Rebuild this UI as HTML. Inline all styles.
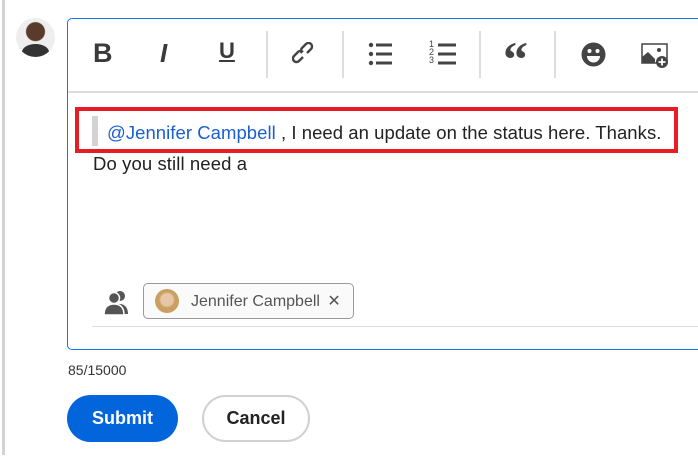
<!DOCTYPE html>
<html><head><style>
body{margin:0;width:698px;height:465px;background:#fff;font-family:"Liberation Sans",sans-serif;position:relative;overflow:hidden;color:#222}
.abs{position:absolute}
.sep{position:absolute;top:31px;width:2px;height:47px;background:#ddd}
.ic{position:absolute;top:38px;color:#444}
</style></head><body>
<div class="abs" style="left:2px;top:0;width:3px;height:455px;background:#d3d3d3"></div>
<div class="abs" style="left:16px;top:18px;width:39px;height:39px;border-radius:50%;background:radial-gradient(circle at 50% 35%,#5a3a2a 0 9px,#eee 10px);overflow:hidden">
<div class="abs" style="left:6px;top:26px;width:27px;height:16px;border-radius:50% 50% 0 0;background:#333"></div></div>
<div class="abs" style="left:67px;top:18px;width:640px;height:332px;border:1px solid #1a73e8;border-radius:5px;box-sizing:border-box"></div>
<div class="abs" style="left:68px;top:91px;width:630px;height:2px;background:#ddd"></div>
<div class="ic" style="left:93px;top:38px;font-weight:bold;font-size:27px;color:#3a3a3a">B</div>
<div class="ic" style="left:160px;top:38px;font-style:italic;font-size:26px;font-weight:bold;color:#3a3a3a">I</div>
<div class="ic" style="left:219px;top:38px;font-size:22px;font-weight:bold;text-decoration:underline;color:#3a3a3a">U</div>
<div class="sep" style="left:266px"></div>
<svg class="abs" style="left:292px;top:42px" width="26" height="26" viewBox="0 0 26 26" fill="none" stroke="#444" stroke-width="2.4"><path d="M11 15l-4 4a3.5 3.5 0 0 1-5-5l4-4a3.5 3.5 0 0 1 5 0"/><path d="M15 11l4-4a3.5 3.5 0 0 0-5-5l-4 4a3.5 3.5 0 0 0 0 5"/></svg>
<div class="sep" style="left:342px"></div>
<svg class="abs" style="left:368px;top:42px" width="26" height="24"><g fill="#444"><circle cx="3" cy="3" r="2.2"/><circle cx="3" cy="12" r="2.2"/><circle cx="3" cy="21" r="2.2"/><rect x="8" y="1.5" width="16" height="3"/><rect x="8" y="10.5" width="16" height="3"/><rect x="8" y="19.5" width="16" height="3"/></g></svg>
<div class="abs" style="left:429px;top:40px;font-size:9px;line-height:8px;color:#444">1<br>2<br>3</div>
<svg class="abs" style="left:438px;top:42px" width="20" height="24"><g fill="#444"><rect x="0" y="1.5" width="18" height="3"/><rect x="0" y="10.5" width="18" height="3"/><rect x="0" y="19.5" width="18" height="3"/></g></svg>
<div class="sep" style="left:479px"></div>
<div class="abs" style="left:503px;top:30px;font-size:50px;font-weight:bold;color:#444;font-family:'Liberation Serif',serif">“</div>
<div class="sep" style="left:554px"></div>
<svg class="abs" style="left:581px;top:42px" width="25" height="25" viewBox="0 0 25 25"><circle cx="12.5" cy="12.5" r="12" fill="#444"/><circle cx="8.5" cy="9" r="2" fill="#fff"/><circle cx="16.5" cy="9" r="2" fill="#fff"/><path d="M6 14h13a6.5 6.5 0 0 1-13 0z" fill="#fff"/></svg>
<svg class="abs" style="left:641px;top:43px" width="28" height="26" viewBox="0 0 28 26"><rect x="1" y="1" width="25" height="19" fill="none" stroke="#444" stroke-width="1.5"/><path d="M1 20V14l6-5 7 7v4z" fill="#444"/><circle cx="18" cy="7" r="2" fill="#444"/><circle cx="21" cy="19" r="6" fill="#444"/><path d="M21 15.5v7M17.5 19h7" stroke="#fff" stroke-width="1.8"/></svg>
<div class="abs" style="left:75px;top:107px;width:603px;height:46px;border:4px solid #e81c24;box-sizing:border-box"></div>
<div class="abs" style="left:92px;top:116px;width:6px;height:30px;background:#d3d3d3"></div>
<div class="abs" style="left:107px;top:122px;font-size:18.5px;letter-spacing:0.05px;white-space:nowrap"><span style="color:#1a5fd0">@Jennifer Campbell</span> , I need an update on the status here. Thanks.</div>
<div class="abs" style="left:93px;top:153px;font-size:18.5px;letter-spacing:0.1px">Do you still need a</div>
<svg class="abs" style="left:103px;top:289px" width="28" height="26" viewBox="0 0 28 26"><g fill="#555"><circle cx="17" cy="7" r="5"/><path d="M10 25c0-7 3-10 7-10s8 3 8 10z"/><circle cx="11" cy="9" r="5.5" stroke="#fff" stroke-width="1.5"/><path d="M1 26c0-8 4-11 10-11s10 3 10 11z" stroke="#fff" stroke-width="1.5"/></g></svg>
<div class="abs" style="left:143px;top:283px;width:211px;height:36px;border:1px solid #999;border-radius:5px;box-sizing:border-box;background:#fafafa"></div>
<div class="abs" style="left:155px;top:289px;width:24px;height:24px;border-radius:50%;background:radial-gradient(circle at 50% 45%,#e8c7a8 0 6px,#c9a060 8px)"></div>
<div class="abs" style="left:191px;top:291px;font-size:16px;color:#555">Jennifer Campbell <span style="margin-left:3px">✕</span></div>
<div class="abs" style="left:92px;top:326px;width:606px;height:1px;background:#ddd"></div>
<div class="abs" style="left:68px;top:362px;font-size:14px;color:#333">85/15000</div>
<div class="abs" style="left:67px;top:395px;width:111px;height:47px;border-radius:24px;background:#0265dc;color:#fff;font-weight:bold;font-size:18px;line-height:47px;text-align:center">Submit</div>
<div class="abs" style="left:202px;top:395px;width:108px;height:47px;border-radius:24px;border:2px solid #d0d0d0;box-sizing:border-box;color:#222;font-weight:bold;font-size:18px;line-height:43px;text-align:center">Cancel</div>
</body></html>
